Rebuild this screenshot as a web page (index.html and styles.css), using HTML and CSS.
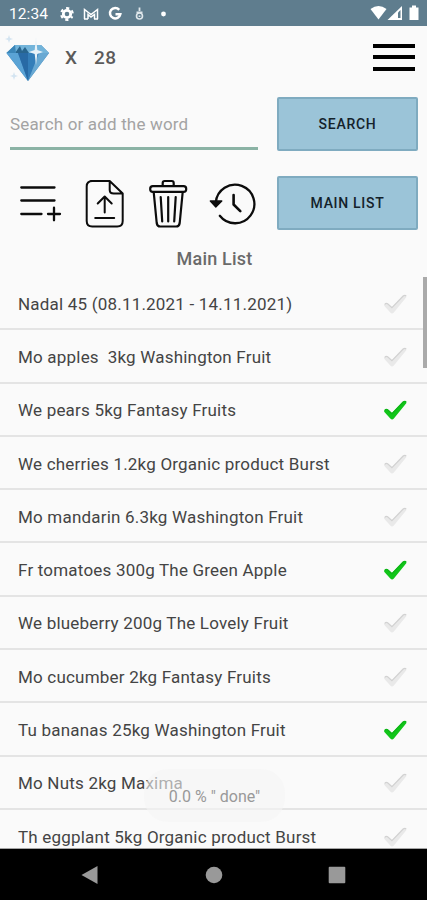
FILE: index.html
```html
<!DOCTYPE html>
<html lang="en">
<head>
<meta charset="utf-8">
<title>Main List</title>
<link rel="stylesheet" href="styles.css">
</head>
<body>
<svg class="defs" width="0" height="0" aria-hidden="true">
  <symbol id="check" viewBox="0 0 26 22">
    <path d="M1.200 12.800C.8 11 3 9.300 4.800 10.200L9.300 14.200L20.500 2.400C22.300 .9 25 1.500 24.200 3.900L11.300 19.800Q9.500 21.800 7.600 19.800Z"/>
    <path class="edge" d="M1.800 11.500Q3 9.800 4.800 10.700L9.300 14.900L21 2.700Q23 1.200 24 2.800"/>
  </symbol>
</svg>
<div class="phone">
  <div class="status">
    <span class="clock">12:34</span>
    <svg class="status-left" width="112" height="18" viewBox="0 0 112 18">
      <g fill="none" stroke="#fff">
        <circle cx="7" cy="9" r="3.700" stroke-width="2.800"/>
        <circle cx="7" cy="9" r="5.800" stroke-width="2.200" stroke-dasharray="3 3.070" stroke-dashoffset="1.500" transform="rotate(30 7 9)"/>
        <path d="M24.500 14V4.500L31 9.500L37.500 4.500V14M28 14V9.500L31 12L34.500 9.500V14M24 14h4M34 14h4" stroke-width="1.500"/>
        <path d="M59.200 4.900A5.200 5.200 0 1 0 60.300 9.200H55.500" stroke-width="2.500"/>
        <g stroke="#dfe7eb">
          <circle cx="79.500" cy="11" r="3" stroke-width="1.600"/>
          <path d="M79.500 2.500V6M76.500 7.300H82.500M79.500 10.500V12" stroke-width="1.800"/>
        </g>
      </g>
      <circle cx="103.500" cy="9" r="2.400" fill="#fff"/>
    </svg>
    <svg class="status-right" width="50" height="16" viewBox="0 0 50 16">
      <path d="M.5 4Q8.500-2 16.500 4L8.500 14.500Z" fill="#fff"/>
      <path d="M17.500 15L32 1V15Z" fill="#fff"/>
      <path d="M28 7.500L30.500 5V13H28Z" fill="#5f7d8e"/>
      <path d="M39.500 2.500H42V.5H46V2.500H48.500V15H39.500Z" fill="#fff"/>
    </svg>
  </div>

  <header class="header">
    <svg class="gem" width="46" height="50" viewBox="0 0 46 50">
      <path d="M11 10H37L45 18L24 46L2.500 18Z" fill="#397fb8"/>
      <path d="M11 10H37L45 18H2.500Z" fill="#73b4da"/>
      <path d="M2.500 18H14L24 46Z" fill="#5aa3d5"/>
      <path d="M14 18H24V46Z" fill="#286aa5"/>
      <path d="M24 18H35L24 46Z" fill="#347eb9"/>
      <path d="M35 18H45L24 46Z" fill="#69a9d3"/>
      <path d="M11 18L16 11L18 16L21 12L25 18Z" fill="#28658e"/>
      <path d="M2.500 18L11 10L12 18Z" fill="#3b86b8"/>
      <path d="M32 2L33.300 15L39 17L33.300 19L32 30L30.700 19L25 17L30.700 15Z" fill="#e8f2f8"/>
      <path d="M5 0L6 3L9 4L6 5L5 8L4 5L1 4L4 3ZM10 37L11 40L14 41L11 42L10 45L9 42L6 41L9 40Z" fill="#d3e4f1"/>
    </svg>
    <span class="times">X</span>
    <span class="count">28</span>
    <span class="menu"><i></i><i></i><i></i></span>
  </header>

  <div class="controls">
    <div class="field"><span>Search or add the word</span></div>
    <div class="button"><span>SEARCH</span></div>
    <div class="tools">
      <svg width="248" height="54" viewBox="0 0 248 54" fill="none" stroke="#0c0c0c" stroke-linecap="round" stroke-linejoin="round">
        <path d="M11.300 11.500H44.500M11.300 24.500H44.500M11.300 38H31.500M38 38H50M44 31.700V44.300" stroke-width="2.300"/>
        <path d="M81 5H100L113 17.500V45Q113 50.500 107.500 50.500H82.500Q77 50.500 77 45V10.500Q77 5 82.500 5M100 5V14Q100 17.500 104 17.500H113M95 36.500V20.800M88 27.500L95 20.500L102 27.500M85.500 42H104.500" stroke-width="2" transform="translate(-.3)"/>
        <g stroke-width="2.200" transform="translate(.2)">
          <path d="M152.500 10V7Q152.500 5 154.500 5H161.500Q163.500 5 163.500 7V10"/>
          <rect x="140" y="10.200" width="36" height="5.600" rx="2.600"/>
          <path d="M143.500 16L146.500 47Q147 50.500 150 50.500H166Q169 50.500 169.500 47L172.500 16M150.500 21L152 45.500M158 21V45.500M165.500 21L164 45.500"/>
        </g>
        <g transform="translate(-.7 -.5)">
          <path d="M206.500 27A19.300 19.300 0 1 1 210.500 40.300" stroke-width="2.300"/>
          <path d="M201 25.500H212.500L206.500 31.500Z" fill="#0c0c0c" stroke-width="1.300"/>
          <path d="M224.300 19.500V29L231 35.700" stroke-width="2.600"/>
        </g>
      </svg>
    </div>
    <div class="button"><span>MAIN LIST</span></div>
  </div>

  <h1 class="title">Main List</h1>

  <main class="viewport">
    <ul class="list">
      <li><span>Nadal 45 (08.11.2021 - 14.11.2021)</span><svg class="tick"><use href="#check"/></svg></li>
      <li><span>Mo apples  3kg Washington Fruit</span><svg class="tick"><use href="#check"/></svg></li>
      <li><span>We pears 5kg Fantasy Fruits</span><svg class="tick done"><use href="#check"/></svg></li>
      <li><span>We cherries 1.2kg Organic product Burst</span><svg class="tick"><use href="#check"/></svg></li>
      <li><span>Mo mandarin 6.3kg Washington Fruit</span><svg class="tick"><use href="#check"/></svg></li>
      <li><span>Fr tomatoes 300g The Green Apple</span><svg class="tick done"><use href="#check"/></svg></li>
      <li><span>We blueberry 200g The Lovely Fruit</span><svg class="tick"><use href="#check"/></svg></li>
      <li><span>Mo cucumber 2kg Fantasy Fruits</span><svg class="tick"><use href="#check"/></svg></li>
      <li><span>Tu bananas 25kg Washington Fruit</span><svg class="tick done"><use href="#check"/></svg></li>
      <li><span>Mo Nuts 2kg Maxima</span><svg class="tick"><use href="#check"/></svg></li>
      <li><span>Th eggplant 5kg Organic product Burst</span><svg class="tick"><use href="#check"/></svg></li>
    </ul>
    <div class="scrollbar"></div>
    <div class="toast">0.0 % " done"</div>
  </main>

  <nav class="nav">
    <svg width="20" height="20" viewBox="0 0 20 20"><path d="M1.500 10L17.500 1V19Z"/></svg>
    <svg width="20" height="20" viewBox="0 0 20 20"><circle cx="10" cy="10" r="8.300"/></svg>
    <svg width="20" height="20" viewBox="0 0 20 20"><rect x="1.700" y="1.700" width="16.600" height="16.600" rx="1"/></svg>
  </nav>
</div>
</body>
</html>
```

FILE: styles.css
```css
* { box-sizing: border-box; }
body { margin: 0; background: #fafafa; font-family: Roboto, sans-serif; }
.defs { position: absolute; }
.phone { display: flex; flex-direction: column; width: 427px; height: 900px; overflow: hidden; }

.status { display: flex; align-items: center; flex: none; height: 26px; padding: 2px 7px 0 9px; background: #5f7d8e; color: #fff; }
.clock { width: 51px; font-size: 15.500px; letter-spacing: .1px; }
.status-right { margin: -2px 0 0 auto; width: 50px; }

.header { display: flex; align-items: center; flex: none; height: 66px; padding: 0 12px 4px 4px; color: #5a5a5a; font-size: 19px; font-weight: 500; }
.gem { margin-top: 6px; }
.times { width: 29px; margin-left: 15px; }
.count { letter-spacing: .4px; }
.menu { display: flex; flex-direction: column; gap: 7.500px; width: 42px; margin-left: auto; }
.menu i { height: 4px; background: #000; }

.controls { display: grid; grid-template-columns: 248px 141px; grid-template-rows: 54px 54px; gap: 25px 19px; flex: none; padding: 5px 9px 0 10px; }
.field { display: flex; align-items: center; height: 53px; padding-top: 4px; border-bottom: 3px solid #8bb3a5; color: #a3a3a3; font-size: 17px; letter-spacing: .17px; }
.button { display: flex; align-items: center; justify-content: center; border: 2px solid #7fabc0; border-radius: 2px; background: #9bc4d8; color: #14222b; font-size: 14px; font-weight: 500; letter-spacing: .7px; }
.tools { display: flex; align-items: center; }
.tools svg { flex: none; }

.title { flex: none; height: 47px; margin: 0; padding-left: 2px; color: #6a6a6a; font-size: 18px; font-weight: 500; line-height: 58px; letter-spacing: .2px; text-align: center; }

.viewport { position: relative; flex: 1; min-height: 0; overflow: hidden; border-bottom: 1px solid #a5a5a5; }
.list { margin: 0; padding: 0; list-style: none; }
.list li { display: flex; align-items: center; justify-content: space-between; height: 53.300px; padding: 2px 19px 0 18px; border-bottom: 2px solid #e4e4e4; color: #444; font-size: 17px; letter-spacing: .2px; white-space: pre; }
.tick { width: 25px; height: 22px; fill: #e9e9e9; stroke: none; }
.tick { --edge: #d2d2d2; }
.tick.done { --edge: #0eb517; fill: #11c51a; }
.edge { fill: none; stroke: var(--edge); stroke-width: 1.200px; }
.scrollbar { position: absolute; top: 0; right: 0; width: 4px; height: 91px; background: #aaa; }
.toast { position: absolute; left: 144px; bottom: 26px; width: 141px; height: 53px; border-radius: 24px; background: rgba(245, 245, 245, .6); color: #999; font-size: 16px; line-height: 55px; text-align: center; }

.nav { display: flex; align-items: center; justify-content: space-between; flex: none; height: 51px; padding: 0 80px; background: #000; fill: #999; }
```
